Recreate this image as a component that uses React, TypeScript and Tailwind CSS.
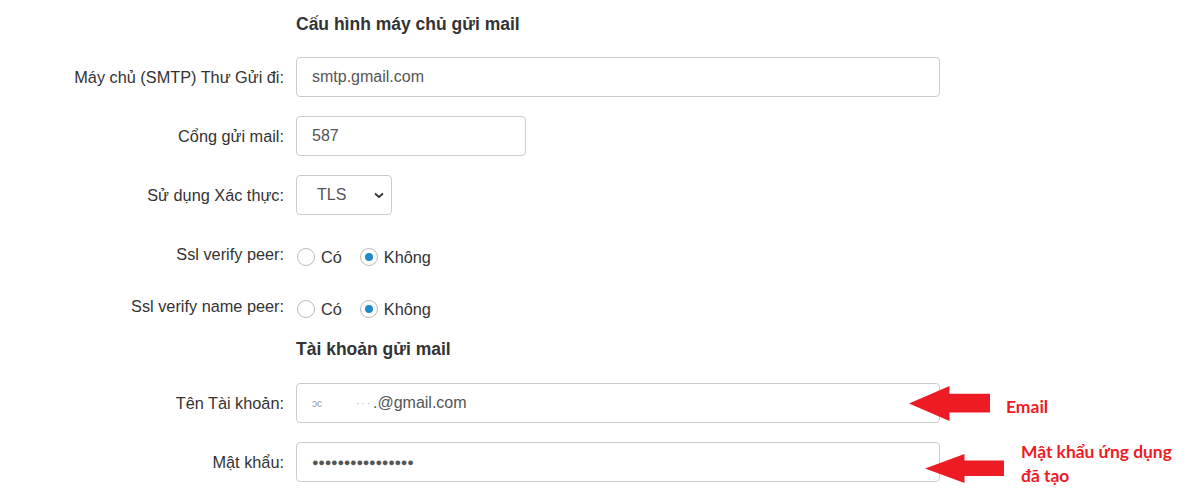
import React from 'react';

const font = { fontFamily: '"Liberation Sans", Arial, sans-serif' };
const noteFont = { fontFamily: 'Lato, "Open Sans", sans-serif' };

function Label({ children }: { children: React.ReactNode }) {
  return (
    <div className="w-[296px] shrink-0 pr-[12px] text-right text-[16.3px] text-[#333]">{children}</div>
  );
}

function TextInput({ value, width }: { value: string; width: string }) {
  return (
    <div
      className={`${width} flex h-[40px] items-center rounded-[4px] border border-[#ccc] bg-white px-[15px] text-[16px] text-[#555]`}
    >
      {value}
    </div>
  );
}

function Radio({ checked }: { checked?: boolean }) {
  return (
    <span className="flex h-[18px] w-[18px] items-center justify-center rounded-full border border-[#bbb] bg-white">
      {checked && <span className="h-[8px] w-[8px] rounded-full bg-[#1f8ac9]" />}
    </span>
  );
}

function RadioRow({ label }: { label: string }) {
  return (
    <div className="flex h-[40px] items-center">
      <Label>{label}</Label>
      <div className="flex items-center pt-[6px] text-[16.3px] text-[#333]">
        <span className="ml-[1px]">
          <Radio />
        </span>
        <span className="ml-[6px]">Có</span>
        <span className="ml-[18px]">
          <Radio checked />
        </span>
        <span className="ml-[6px]">Không</span>
      </div>
    </div>
  );
}

function Arrow({ width, height }: { width: number; height: number }) {
  const h = height;
  const headW = width * 0.5;
  return (
    <svg width={width} height={h} viewBox={`0 0 ${width} ${h}`}>
      <polygon
        fill="#ed1c24"
        points={`0,${h / 2} ${headW},0 ${headW},${h * 0.22} ${width},${h * 0.22} ${width},${h * 0.76} ${headW},${h * 0.76} ${headW},${h}`}
      />
    </svg>
  );
}

export default function App() {
  return (
    <div className="relative h-[494px] w-[1192px] overflow-hidden bg-white" style={font}>
      <div className="flex flex-col pt-[13px]">
        <div className="flex h-[22px] items-center">
          <div className="w-[296px] shrink-0" />
          <h3 className="text-[17.5px] font-bold text-[#333]">Cấu hình máy chủ gửi mail</h3>
        </div>

        <div className="mt-[22px] flex items-center">
          <Label>Máy chủ (SMTP) Thư Gửi đi:</Label>
          <TextInput value="smtp.gmail.com" width="w-[644px]" />
        </div>

        <div className="mt-[19px] flex items-center">
          <Label>Cổng gửi mail:</Label>
          <TextInput value="587" width="w-[230px]" />
        </div>

        <div className="mt-[19px] flex items-center">
          <Label>Sử dụng Xác thực:</Label>
          <div className="flex h-[40px] w-[96px] items-center justify-between rounded-[4px] border border-[#ccc] bg-white pl-[20px] pr-[6px] text-[16px] text-[#555]">
            <span>TLS</span>
            <svg width="12" height="12" viewBox="0 0 12 12">
              <path d="M2 4.5 L6 8 L10 4.5" fill="none" stroke="#333" strokeWidth="1.8" />
            </svg>
          </div>
        </div>

        <div className="mt-[19px]">
          <RadioRow label="Ssl verify peer:" />
        </div>
        <div className="mt-[12px]">
          <RadioRow label="Ssl verify name peer:" />
        </div>

        <div className="mt-[12px] flex h-[22px] items-center">
          <div className="w-[296px] shrink-0" />
          <h3 className="text-[17.5px] font-bold text-[#333]">Tài khoản gửi mail</h3>
        </div>

        <div className="mt-[23px] flex items-center">
          <Label>Tên Tài khoản:</Label>
          <div className="flex h-[40px] w-[644px] items-center rounded-[4px] border border-[#ccc] bg-white px-[15px] text-[16px] text-[#555]">
            <span className="text-[10px] text-[#999]">ɔc</span>
            <span className="ml-[34px] text-[10px] tracking-[2px] text-[#aaa]">···</span>
            <span className="ml-[1px]">.@gmail.com</span>
          </div>
        </div>

        <div className="mt-[19px] flex items-center">
          <Label>Mật khẩu:</Label>
          <div className="flex h-[40px] w-[644px] items-center rounded-[4px] border border-[#ccc] bg-white px-[15px] text-[11px] tracking-[-0.3px] text-[#555]">
            ●●●●●●●●●●●●●●●●
          </div>
        </div>
      </div>

      {/* annotations */}
      <div className="absolute left-[909px] top-[386px]">
        <Arrow width={81} height={35} />
      </div>
      <div className="absolute left-[1006px] top-[394px] text-[17.5px] font-bold text-[#ed1c24]" style={noteFont}>
        Email
      </div>
      <div className="absolute left-[925px] top-[454px]">
        <Arrow width={79} height={29} />
      </div>
      <div
        className="absolute left-[1021px] top-[440px] text-[17.4px] font-bold leading-[24px] text-[#ed1c24]"
        style={noteFont}
      >
        Mật khẩu ứng dụng
        <br />
        đã tạo
      </div>
    </div>
  );
}
